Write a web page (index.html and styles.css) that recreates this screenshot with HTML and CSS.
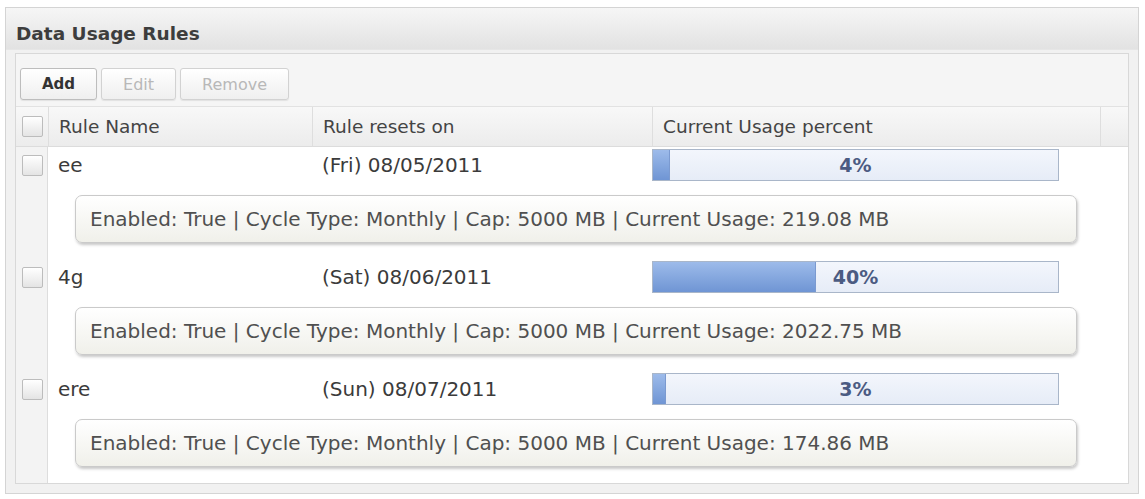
FILE: index.html
```html
<!DOCTYPE html>
<html lang="en">
<head>
    <meta charset="UTF-8">
    <title>Data Usage Rules</title>
    <link rel="stylesheet" href="styles.css">
</head>
<body>

    <div class="panel">
        <div class="panel-title">Data Usage Rules</div>

        <div class="panel-body">
            <div class="rules-box">
                <!-- Barra de ações -->
                <div class="toolbar">
                    <button class="btn btn-primary">Add</button>
                    <button class="btn" disabled>Edit</button>
                    <button class="btn" disabled>Remove</button>
                </div>

                <!-- Tabela de regras -->
                <div class="rules">
                    <div class="cell head check-col"><span class="check"></span></div>
                    <div class="cell head">Rule Name</div>
                    <div class="cell head">Rule resets on</div>
                    <div class="cell head">Current Usage percent</div>
                    <div class="cell head"></div>

                    <div class="cell check-col"><span class="check"></span></div>
                    <div class="cell">ee</div>
                    <div class="cell">(Fri) 08/05/2011</div>
                    <div class="cell bar-cell">
                        <div class="bar"><div class="bar-fill" style="width: 4%"></div><span class="bar-label">4%</span></div>
                    </div>
                    <div class="cell"></div>
                    <div class="cell check-col"></div>
                    <div class="detail-cell">
                        <div class="detail">Enabled: True | Cycle Type: Monthly | Cap: 5000 MB | Current Usage: 219.08 MB</div>
                    </div>

                    <div class="cell check-col"><span class="check"></span></div>
                    <div class="cell">4g</div>
                    <div class="cell">(Sat) 08/06/2011</div>
                    <div class="cell bar-cell">
                        <div class="bar"><div class="bar-fill" style="width: 40%"></div><span class="bar-label">40%</span></div>
                    </div>
                    <div class="cell"></div>
                    <div class="cell check-col"></div>
                    <div class="detail-cell">
                        <div class="detail">Enabled: True | Cycle Type: Monthly | Cap: 5000 MB | Current Usage: 2022.75 MB</div>
                    </div>

                    <div class="cell check-col"><span class="check"></span></div>
                    <div class="cell">ere</div>
                    <div class="cell">(Sun) 08/07/2011</div>
                    <div class="cell bar-cell">
                        <div class="bar"><div class="bar-fill" style="width: 3%"></div><span class="bar-label">3%</span></div>
                    </div>
                    <div class="cell"></div>
                    <div class="cell check-col"></div>
                    <div class="detail-cell">
                        <div class="detail">Enabled: True | Cycle Type: Monthly | Cap: 5000 MB | Current Usage: 174.86 MB</div>
                    </div>
                </div>
            </div>
        </div>
    </div>

</body>
</html>
```

FILE: styles.css
```css
/* Estilo global */
body {
    margin: 0;
    background-color: #fff;
    font-family: "DejaVu Sans", Verdana, sans-serif;
    color: #3b3b3b;
}

/* Painel principal */
.panel {
    margin: 7px 6px 0 5px;
    border: 1px solid #d4d4d4;
    background-color: #f1f1f1;
}

.panel-title {
    height: 42px;
    box-sizing: border-box;
    padding: 15px 10px 0;
    font-size: 18.5px;
    font-weight: bold;
    line-height: 22px;
    color: #3d3d3d;
    background: linear-gradient(#f6f6f6, #e2e2e2);
    border-bottom: 1px solid #e6e6e6;
}

.panel-body {
    padding: 3px 9px 9px;
}

.rules-box {
    border: 1px solid #d8d8d8;
    background-color: #f5f5f5;
}

/* Barra de botões */
.toolbar {
    display: flex;
    gap: 4px;
    height: 53px;
    box-sizing: border-box;
    padding: 14px 0 0 4px;
    border-bottom: 1px solid #e2e2e2;
}

.btn {
    height: 32px;
    padding: 0 21px;
    font-family: inherit;
    font-size: 16px;
    color: #b8b8b8;
    background: linear-gradient(#ffffff, #efefef);
    border: 1px solid #d2d2d2;
    border-radius: 3px;
    box-shadow: 0 1px 1px rgba(0, 0, 0, 0.08);
}

.btn-primary {
    font-size: 15px;
    font-weight: bold;
    color: #333;
    border-color: #bdbdbd;
}

/* Grade de regras */
.rules {
    display: grid;
    grid-template-columns: 32px 264px 340px 448px 1fr;
    background-color: #fff;
}

.cell {
    min-height: 36px;
    display: flex;
    align-items: center;
    padding-left: 10px;
    font-size: 20px;
    background-color: #fff;
}

.cell.head {
    min-height: 39px;
    padding-left: 10px;
    font-size: 18.5px;
    color: #444;
    background: linear-gradient(#f8f8f8, #ececec);
    border-bottom: 1px solid #dcdcdc;
    border-left: 1px solid #dedede;
}

.cell.head:first-child {
    border-left: none;
}

.cell.check-col {
    padding-left: 6px;
    background: #f3f3f3;
    border-right: 1px solid #dddddd;
}

.cell.head.check-col {
    border-right: none;
    background: linear-gradient(#f8f8f8, #ececec);
}

.check {
    width: 21px;
    height: 21px;
    box-sizing: border-box;
    border: 1px solid #bcbcbc;
    border-radius: 2px;
    background: linear-gradient(#ffffff, #e4e4e4);
}

.cell.bar-cell {
    padding-left: 0;
}

/* Barra de progresso */
.bar {
    position: relative;
    width: 407px;
    height: 32px;
    box-sizing: border-box;
    border: 1px solid #a9b6c9;
    background: linear-gradient(#f3f6fc, #e6ecf7);
    overflow: hidden;
}

.bar-fill {
    height: 100%;
    background: linear-gradient(#9dbbea, #6f95d4);
    border-right: 1px solid #7b9ad0;
}

.bar-label {
    position: absolute;
    inset: 0;
    display: flex;
    justify-content: center;
    align-items: center;
    font-size: 19px;
    font-weight: bold;
    color: #4b5b82;
}

/* Detalhes de cada regra */
.detail-cell {
    grid-column: 2 / 6;
    padding: 12px 51px 16px 27px;
    background-color: #fff;
}

.detail {
    height: 48px;
    box-sizing: border-box;
    display: flex;
    align-items: center;
    padding-left: 14px;
    font-size: 20px;
    color: #505050;
    background: linear-gradient(#ffffff, #f0f0ea);
    border: 1px solid #cacaca;
    border-radius: 7px;
    box-shadow: 1px 2px 3px rgba(0, 0, 0, 0.22);
}
```
